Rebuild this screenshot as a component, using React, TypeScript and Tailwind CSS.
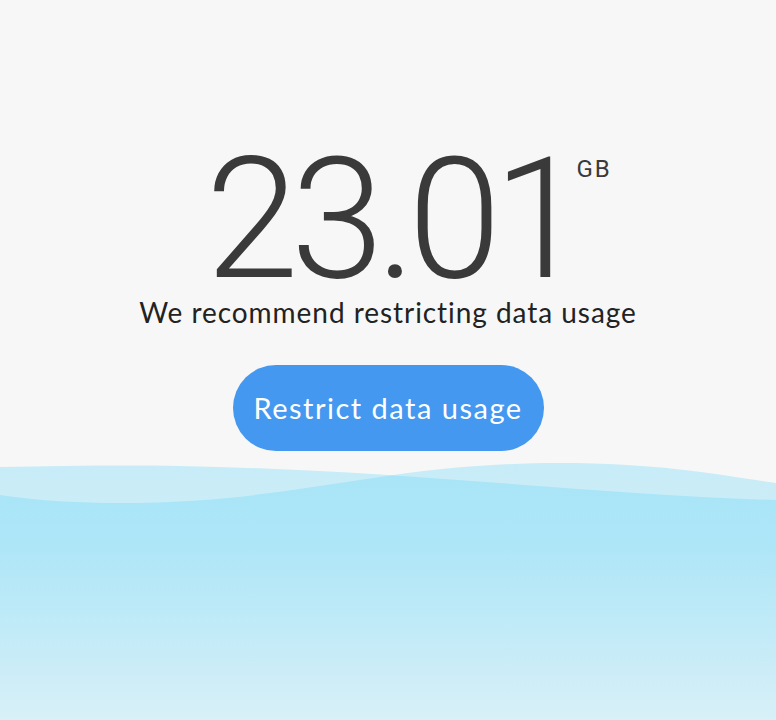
export default function App() {
  return (
    <div className="w-full h-[720px] bg-[#f7f7f7] flex flex-col items-center overflow-hidden">
      <div className="relative mt-[150px] ml-[8px] flex">
        <span className="font-['Roboto',sans-serif] font-light text-[168px] leading-[140px] text-[#3a3a3a] tracking-[-8px]">
          23.01
        </span>
        <span className="absolute left-full top-[7px] -ml-[2px] font-['Roboto',sans-serif] font-normal text-[24px] leading-[24px] tracking-[2px] text-[#3a3a3a]">
          GB
        </span>
      </div>
      <div className="mt-[4px] font-['Lato',sans-serif] text-[28px] leading-[36px] tracking-[0.95px] text-[#222222]">
        We recommend restricting data usage
      </div>
      <button className="mt-[35px] h-[86px] w-[311px] rounded-full bg-[#4498ef] text-white font-['Lato',sans-serif] text-[29px] tracking-[1.5px] flex items-center justify-center">
        Restrict data usage
      </button>
      <svg
        className="mt-[4px] w-full h-[265px] shrink-0"
        viewBox="0 0 776 265"
        preserveAspectRatio="none"
      >
        <defs>
          <linearGradient id="g1" x1="0" y1="0" x2="0" y2="265" gradientUnits="userSpaceOnUse">
            <stop offset="0" stopColor="rgb(100,213,247)" stopOpacity="0.32" />
            <stop offset="0.3" stopColor="rgb(100,213,247)" stopOpacity="0.3" />
            <stop offset="1" stopColor="rgb(100,213,247)" stopOpacity="0.11" />
          </linearGradient>
        </defs>
        <path
          d="M0 40 C 40 46, 80 48, 120 48 C 300 48, 380 8, 560 8 C 660 8, 720 20, 776 28 L776 265 L0 265 Z"
          fill="url(#g1)"
        />
        <path
          d="M0 12 C 60 11, 120 10, 180 11 C 400 15, 600 40, 776 45 L776 265 L0 265 Z"
          fill="url(#g1)"
        />
      </svg>
    </div>
  );
}
